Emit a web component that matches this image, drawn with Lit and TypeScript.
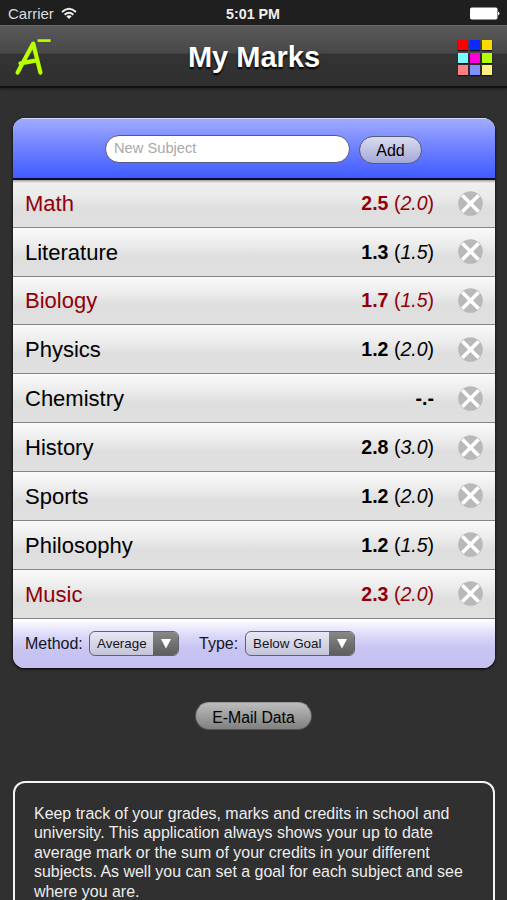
import { LitElement, html, css } from "lit";
import { customElement } from "lit/decorators.js";
import { classMap } from "lit/directives/class-map.js";

interface Subject {
  name: string;
  mark: string;
  goal?: string;
  below?: boolean;
}

const SUBJECTS: Subject[] = [
  { name: "Math", mark: "2.5", goal: "2.0", below: true },
  { name: "Literature", mark: "1.3", goal: "1.5" },
  { name: "Biology", mark: "1.7", goal: "1.5", below: true },
  { name: "Physics", mark: "1.2", goal: "2.0" },
  { name: "Chemistry", mark: "-.-" },
  { name: "History", mark: "2.8", goal: "3.0" },
  { name: "Sports", mark: "1.2", goal: "2.0" },
  { name: "Philosophy", mark: "1.2", goal: "1.5" },
  { name: "Music", mark: "2.3", goal: "2.0", below: true },
];

const SWATCHES = [
  "#ff0000", "#0a28ff", "#ffd800",
  "#7cfcff", "#ff00dc", "#b4ff00",
  "#ff8080", "#8090ff", "#ffee80",
];

@customElement("app-root")
export class AppRoot extends LitElement {
  static styles = css`
    :host {
      display: block;
      height: 900px;
      overflow: hidden;
      background: #303030;
      font-family: "Liberation Sans", Arial, Helvetica, sans-serif;
      color: #000;
    }
    * { box-sizing: border-box; }
    svg { display: block; }
    .status {
      height: 25px;
      padding: 2px 7px 0 8px;
      background: #1f1f1f;
      color: #f0f0f0;
      display: grid;
      grid-template-columns: 218px 1fr auto;
      align-items: center;
    }
    .carrier { display: flex; align-items: center; gap: 7px; font-size: 15px; color: #dcdcdc; }
    .clock { font-size: 14.3px; font-weight: bold; }
    .bar {
      height: 63px;
      padding: 0 15px 0 13px;
      display: grid;
      grid-template-columns: 40px 1fr 34px;
      align-items: center;
      border-top: 1px solid #6a6a6a;
      border-bottom: 2px solid #111;
      background: linear-gradient(#595959 0, #484848 27px, #343434 28px, #2f2f2f 100%);
      box-shadow: 0 1px 2px rgba(0, 0, 0, 0.4);
    }
    .title {
      margin: 0 3px 0 0;
      text-align: center;
      font-size: 29px;
      line-height: 62px;
      color: #fff;
      text-shadow: 0 2px 2px #000;
    }
    .grid {
      display: grid;
      grid-template-columns: repeat(3, 10px);
      grid-auto-rows: 10px;
      gap: 2.2px;
      padding-top: 1px;
    }
    .swatch { box-shadow: 0 1px 1px #111; }
    .shade { margin: 30px 12px 0 13px; border-radius: 12px; box-shadow: 0 1px 3px #000; }
    .card {
      height: 550px;
      border-radius: 12px;
      overflow: hidden;
      background: #e0e0e0;
    }
    .add {
      height: 62px;
      padding: 15.5px 0 0 92px;
      display: flex;
      align-items: flex-start;
      gap: 9px;
      border-top: 1px solid #d4d8ff;
      border-bottom: 2px solid #080c2c;
      background: linear-gradient(#a0acff, #7284ff 45%, #3f5bff);
    }
    .field {
      width: 245px;
      height: 28px;
      padding-left: 8px;
      border: 1px solid #555a78;
      border-radius: 14px;
      background: #fff;
      color: #a9a9a9;
      font-size: 14.7px;
      line-height: 25px;
    }
    .add-button {
      width: 63px;
      height: 28px;
      margin-top: 1px;
      border: 1px solid #555a78;
      border-radius: 14px;
      background: linear-gradient(#dadcee, #a4a8d8);
      text-align: center;
      font-size: 16px;
      line-height: 28px;
    }
    .rows { height: 438.5px; display: grid; grid-template-rows: 47.7px repeat(8, 1fr); }
    .row {
      display: flex;
      align-items: center;
      padding: 0 12px;
      border-bottom: 1px solid #858585;
      background: linear-gradient(#fafafa 0, #ececec 35%, #dedede 60%, #e0e0e0 100%);
    }
    .row:first-child { background: linear-gradient(#a0a0a0 0, #efefef 3px, #ebebeb 35%, #dedede 60%, #e0e0e0 100%); }
    .below { color: #900008; }
    .name { flex: 1; font-size: 22px; line-height: 26px; padding-top: 2px; }
    .value { font-size: 19.5px; line-height: 24px; margin-right: 24px; }
    .footer {
      height: 49.5px;
      padding: 1px 0 0 12px;
      display: flex;
      align-items: center;
      background: linear-gradient(#fff 0, #d9d8f9 35%, #c8c5f3 60%, #c4c1f1 100%);
      font-size: 16px;
      color: #15151c;
    }
    .label { width: 64px; }
    .label-type { width: 46px; margin-left: 20px; }
    .select {
      display: flex;
      height: 25px;
      border: 1px solid #62626c;
      border-radius: 6px;
      overflow: hidden;
      background: linear-gradient(#e8e8f4, #c4c4d8);
      font-size: 13.4px;
      line-height: 24px;
    }
    .method { width: 90px; }
    .type { width: 110px; }
    .choice { flex: 1; padding-left: 7px; white-space: nowrap; }
    .arrow {
      width: 25px;
      display: grid;
      place-items: center;
      background: linear-gradient(#888, #5d5d5d);
    }
    .email {
      width: 117px;
      height: 28px;
      margin: 34.4px auto 0 195px;
      border: 1px solid #555;
      border-top-color: #999;
      border-radius: 14px;
      background: linear-gradient(#bcbcbc, #808080);
      text-align: center;
      font-size: 15.8px;
      line-height: 29px;
    }
    .about {
      margin: 51.1px 12px 0 13px;
      height: 220px;
      padding: 20.5px 0 0 19px;
      border: 2px solid #f4f4f4;
      border-radius: 12px;
      color: #ededed;
      font-size: 15.95px;
      line-height: 19.5px;
      white-space: nowrap;
    }
  `;

  private renderRow(s: Subject) {
    return html`<div class=${classMap({ row: true, below: !!s.below })}>
      <div class="name">${s.name}</div>
      <div class="value"><b>${s.mark}</b>${s.goal ? html` (<i>${s.goal}</i>)` : ""}</div>
      <svg width="25" height="25" viewBox="0 0 25 25">
        <circle cx="12.5" cy="12.5" r="12.3" fill="#b9b9b9" />
        <path d="M4.3 4.3L20.7 20.7M20.7 4.3L4.3 20.7" stroke="#fff" stroke-width="3.6" />
      </svg>
    </div>`;
  }

  private renderArrow() {
    return html`<div class="arrow">
      <svg width="12" height="11" viewBox="0 0 12 11"><path d="M1 1H11L6 10.5Z" fill="#fff" /></svg>
    </div>`;
  }

  render() {
    return html`
      <div class="status">
        <div class="carrier">
          <span>Carrier</span>
          <svg width="16" height="13" viewBox="0 0 16 13" fill="none" stroke="#eee" stroke-width="2">
            <path d="M1 5Q8 -1.6 15 5M3.6 7.8Q8 3.8 12.4 7.8" />
            <path d="M5.3 9.2Q8 7.2 10.7 9.2L8 12Z" fill="#eee" stroke="none" />
          </svg>
        </div>
        <div class="clock">5:01 PM</div>
        <svg width="31" height="13" viewBox="0 0 31 13">
          <rect x="1" y="0.5" width="27.5" height="12" rx="1.8" fill="#fff" />
          <path d="M29 4.5Q32 6.5 29 8.5Z" fill="#fff" />
        </svg>
      </div>
      <div class="bar">
        <svg width="40" height="42" viewBox="0 0 40 42" fill="none" stroke="#b8ff00" stroke-linecap="round" stroke-linejoin="round">
          <path d="M4.6 36.6L20.2 7.6L27.4 36.6M7.5 27.4L22.3 24.6" stroke-width="4.2" />
          <path d="M24.6 4.6H37.6" stroke-width="2.7" stroke-linecap="butt" />
        </svg>
        <h1 class="title">My Marks</h1>
        <div class="grid">
          ${SWATCHES.map((c) => html`<div class="swatch" style="background:${c}"></div>`)}
        </div>
      </div>
      <div class="shade">
        <div class="card">
          <div class="add">
            <div class="field">New Subject</div>
            <div class="add-button">Add</div>
          </div>
          <div class="rows">${SUBJECTS.map((s) => this.renderRow(s))}</div>
          <div class="footer">
            <div class="label">Method:</div>
            <div class="select method"><div class="choice">Average</div>${this.renderArrow()}</div>
            <div class="label-type">Type:</div>
            <div class="select type"><div class="choice">Below Goal</div>${this.renderArrow()}</div>
          </div>
        </div>
      </div>
      <div class="email">E-Mail Data</div>
      <div class="about">
        Keep track of your grades, marks and credits in school and<br />university. This application
        always shows your up to date<br />average mark or the sum of your credits in your different<br />subjects.
        As well you can set a goal for each subject and see<br />where you are.
      </div>
    `;
  }
}
